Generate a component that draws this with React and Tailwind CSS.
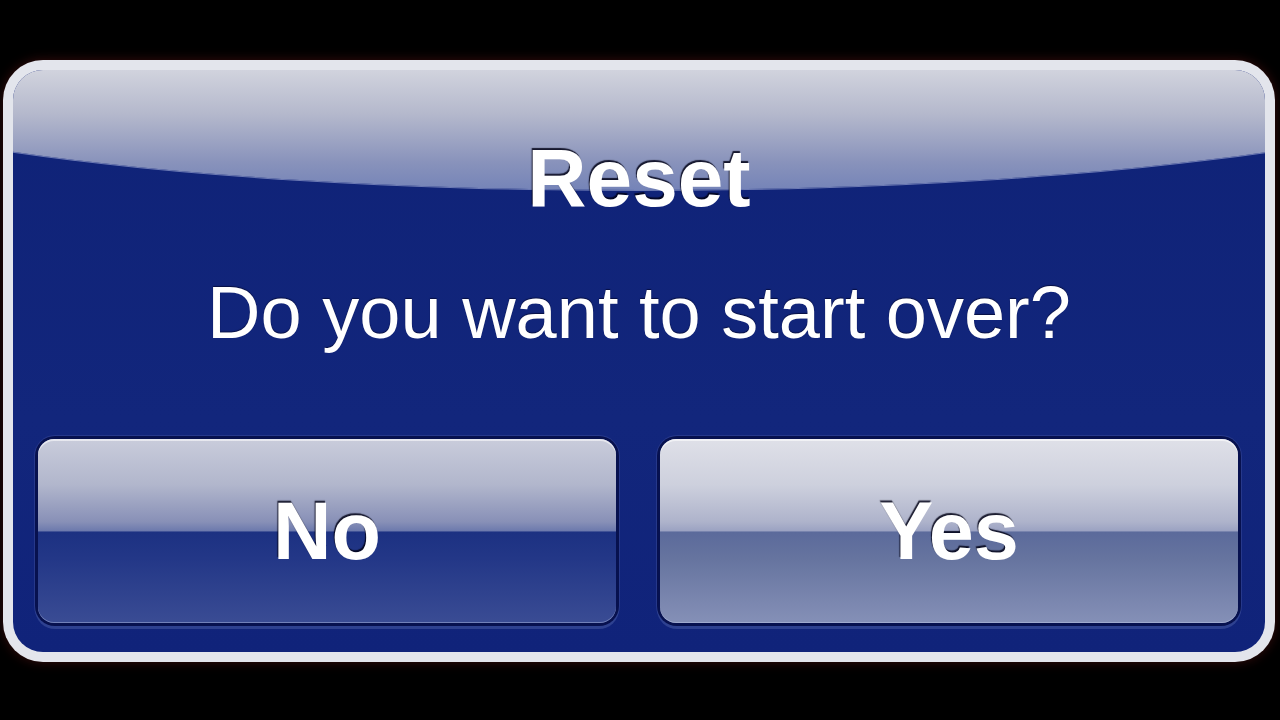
export default function App() {
    return (
        <div className="w-[1280px] h-[720px] bg-black pt-[60px] pl-[3px] font-['Liberation_Sans',Arial,sans-serif] overflow-hidden">
            {/* Dialog frame */}
            <div className="w-[1272px] h-[602px] rounded-[40px] bg-[#e3e5ec] p-[10px] shadow-[0_0_12px_rgba(90,20,20,0.6)]">
                <div className="relative h-full rounded-[30px] bg-[linear-gradient(180deg,#0f2277_0%,#12267c_60%,#10237a_100%)] overflow-hidden flex flex-col items-center">
                    {/* top gloss */}
                    <div className="absolute left-[-273px] top-[-150px] w-[1800px] h-[270px] rounded-[50%] bg-[linear-gradient(180deg,#d2d4de_55%,#b4b8cc_72%,#8892bb_90%,#7584b8_100%)] shadow-[0_1px_0_rgba(170,180,220,0.6)]"></div>

                    <h1 className="relative mt-[67px] text-[82px] leading-none font-bold text-white [text-shadow:-1px_-2px_1px_rgba(0,0,20,0.85)]">Reset</h1>
                    <p className="relative mt-[57px] text-[74px] leading-none text-white [text-shadow:0_-1px_1px_rgba(0,0,30,0.6)]">Do you want to start over?</p>

                    <div className="relative mt-auto mb-[26px] w-full pl-[22px] pr-[24px] flex gap-[38px]">
                        <DialogButton label="No" dark />
                        <DialogButton label="Yes" />
                    </div>
                </div>
            </div>
        </div>
    );
}

function DialogButton({ label, dark }) {
    const face = dark
        ? "bg-[linear-gradient(180deg,#c9ccdb_0%,#b1b6cc_25%,#8890b7_45%,#6c79ad_50%,#1c3182_50.5%,#233787_65%,#3a4c94_100%)]"
        : "bg-[linear-gradient(180deg,#dfe0e8_0%,#cdd0dd_25%,#aeb3cb_45%,#9ba2c2_50%,#5b6a9b_50.5%,#66749f_65%,#8590b7_100%)]";
    return (
        <div className="flex-1 rounded-[20px] p-[3px] bg-[#07114f] shadow-[0_3px_0_#2e4190,0_0_0_1px_#26388a]">
            <div className={`h-[184px] rounded-[16px] ${face} shadow-[inset_0_2px_0_rgba(255,255,255,0.55),inset_0_-1px_0_rgba(200,210,240,0.4)] flex items-center justify-center`}>
                <span className="text-[81px] leading-none font-bold text-white [text-shadow:-1px_-2px_1px_rgba(0,0,20,0.85)]">{label}</span>
            </div>
        </div>
    );
}
